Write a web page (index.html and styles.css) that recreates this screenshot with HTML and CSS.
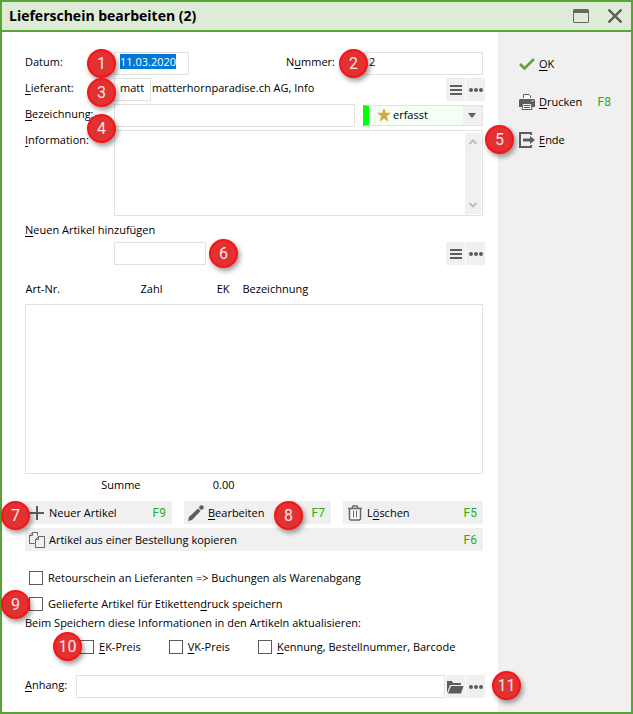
FILE: index.html
```html
<!DOCTYPE html>
<html lang="de">
<head>
    <meta charset="UTF-8">
    <meta name="viewport" content="width=device-width, initial-scale=1.0">
    <title>Lieferschein bearbeiten (2)</title>
    <link rel="stylesheet" href="styles.css">
</head>
<body>
    <div class="window">
        <header class="titlebar">
            <h1>Lieferschein bearbeiten (2)</h1>
            <button class="title-btn" aria-label="Maximieren">
                <svg width="16" height="14" viewBox="0 0 16 14"><path d="M1 0h14l1 1v12l-1 1H1l-1-1V1z" fill="#666"/><path d="M1 4h14v9H1z" fill="#deecd7"/></svg>
            </button>
            <button class="title-btn" aria-label="Schliessen">
                <svg width="14" height="14" viewBox="0 0 14 14"><path d="M0.500 0.500l13 13M13.500 0.500l-13 13" stroke="#5c5c5c" stroke-width="2.4"/></svg>
            </button>
        </header>

        <div class="content">
            <main class="form">
                <div class="row">
                    <label class="label raised" for="datum">Datum:</label>
                    <div class="field">
                        <input id="datum" class="input date" type="text" value="11.03.2020">
                        <span class="badge before">1</span>
                    </div>
                    <label class="label-number raised" for="nummer">N<u>u</u>mmer:</label>
                    <div class="field number">
                        <input id="nummer" class="input" type="text" value="2">
                        <span class="badge before-number">2</span>
                    </div>
                </div>
                <div class="row">
                    <label class="label raised" for="lieferant"><u>L</u>ieferant:</label>
                    <div class="field">
                        <input id="lieferant" class="input short" type="text" value="matt">
                        <span class="badge before lower">3</span>
                    </div>
                    <span class="supplier raised">matterhornparadise.ch AG, Info</span>
                    <div class="tools">
                        <button class="tool" aria-label="Liste"><svg width="12" height="10" viewBox="0 0 12 10"><path d="M0 1h12M0 5h12M0 9h12" stroke="#5c5c5c" stroke-width="2"/></svg></button>
                        <button class="tool" aria-label="Mehr"><svg width="14" height="4" viewBox="0 0 14 4"><g fill="#5c5c5c"><circle cx="2" cy="2" r="2"/><circle cx="7" cy="2" r="2"/><circle cx="12" cy="2" r="2"/></g></svg></button>
                    </div>
                </div>
                <div class="row">
                    <label class="label raised" for="bezeichnung"><u>B</u>ezeichnung:</label>
                    <div class="field grow">
                        <input id="bezeichnung" class="input" type="text">
                        <span class="badge before lowest">4</span>
                    </div>
                    <div class="status">
                        <select class="status-select" aria-label="Status">
                            <option>erfasst</option>
                        </select>
                        <svg class="star" width="14" height="14" viewBox="0 0 14 14"><path d="M7 0l1.800 4.800H14L9.900 8.200l1.500 5.500L7 10.500l-4.400 3.200 1.500-5.500L0 4.800h5.200z" fill="#d4a941"/></svg>
                        <svg class="arrow" width="8" height="5" viewBox="0 0 8 5"><path d="M0 0h8L4 5z" fill="#5c5c5c"/></svg>
                    </div>
                </div>
                <div class="row row-info">
                    <label class="label" for="information"><u>I</u>nformation:</label>
                    <div class="field grow">
                        <textarea id="information" class="textarea"></textarea>
                        <div class="scroll">
                            <svg width="8" height="6" viewBox="0 0 8 6"><path d="M0.500 5L4 1.500 7.500 5" fill="none" stroke="#bdbdbd" stroke-width="2"/></svg>
                            <svg width="8" height="6" viewBox="0 0 8 6"><path d="M0.500 1L4 4.500 7.500 1" fill="none" stroke="#bdbdbd" stroke-width="2"/></svg>
                        </div>
                    </div>
                </div>

                <label class="add-label" for="artikel"><u>N</u>euen Artikel hinzufügen</label>
                <div class="row">
                    <div class="field add-field">
                        <input id="artikel" class="input article" type="text">
                        <span class="badge after">6</span>
                    </div>
                    <div class="tools">
                        <button class="tool" aria-label="Liste"><svg width="12" height="10" viewBox="0 0 12 10"><path d="M0 1h12M0 5h12M0 9h12" stroke="#5c5c5c" stroke-width="2"/></svg></button>
                        <button class="tool" aria-label="Mehr"><svg width="14" height="4" viewBox="0 0 14 4"><g fill="#5c5c5c"><circle cx="2" cy="2" r="2"/><circle cx="7" cy="2" r="2"/><circle cx="12" cy="2" r="2"/></g></svg></button>
                    </div>
                </div>

                <table class="articles">
                    <colgroup><col class="col-nr"><col class="col-count"><col class="col-price"><col></colgroup>
                    <thead>
                        <tr><th>Art-Nr.</th><th>Zahl</th><th class="price">EK</th><th>Bezeichnung</th></tr>
                    </thead>
                    <tbody>
                        <tr><td class="list" colspan="4"></td></tr>
                    </tbody>
                    <tfoot>
                        <tr><td class="right">Summe</td><td></td><td class="right total">0.00</td><td></td></tr>
                    </tfoot>
                </table>

                <div class="actions">
                    <button class="action">
                        <svg width="16" height="16" viewBox="0 0 16 16"><path d="M8 1v14M1 8h14" stroke="#5c5c5c" stroke-width="2"/></svg>
                        Neuer Artikel <kbd>F9</kbd>
                        <span class="badge on-new">7</span>
                    </button>
                    <button class="action">
                        <svg width="16" height="16" viewBox="0 0 16 16"><path d="M0 16l1-4L10 3.500l2.500 2.500L4 15z" fill="#5c5c5c"/><circle cx="13.500" cy="2.500" r="2.300" fill="#5c5c5c"/></svg>
                        <span><u>B</u>earbeiten</span> <kbd>F7</kbd>
                        <span class="badge on-edit">8</span>
                    </button>
                    <button class="action">
                        <svg width="16" height="16" viewBox="0 0 16 16"><path d="M3 4h10v10l-1 1H4l-1-1z" fill="#fafafa"/><path d="M2.500 4v10l1 1h9l1-1V4M1 3.500h14M5 3l1-2h4l1 2" fill="none" stroke="#666" stroke-width="1.500"/><path d="M6.500 5.500v7M9.500 5.500v7" stroke="#666"/></svg>
                        <span>L<u>ö</u>schen</span> <kbd>F5</kbd>
                    </button>
                    <button class="action wide">
                        <svg width="16" height="16" viewBox="0 0 16 16"><path d="M5.500 11.500h-5v-8l3-3h5v3M3.500 0.500v3h-3M6.500 7.500l3-3h6v11h-9zM9.500 4.500v3h-3" fill="none" stroke="#666"/></svg>
                        Artikel aus einer Bestellung kopieren <kbd>F6</kbd>
                    </button>
                </div>

                <div class="checks">
                    <label class="check"><input type="checkbox">Retourschein an Lieferanten =&gt; Buchungen als Warenabgang</label>
                    <label class="check"><input type="checkbox"><span>Gelieferte Artikel für Etiketten<u>d</u>ruck speichern</span><span class="badge on-check">9</span></label>
                </div>
                <p class="note">Beim Speichern diese Informationen in den Artikeln aktualisieren:</p>
                <div class="check-row">
                    <label class="check"><input type="checkbox"><span><u>E</u>K-Preis</span><span class="badge on-price">10</span></label>
                    <label class="check"><input type="checkbox"><span><u>V</u>K-Preis</span></label>
                    <label class="check"><input type="checkbox"><span><u>K</u>ennung, Bestellnummer, Barcode</span></label>
                </div>

                <div class="row row-file">
                    <label class="label-file raised" for="anhang"><u>A</u>nhang:</label>
                    <div class="field grow"><input id="anhang" class="input" type="text"></div>
                    <div class="tools">
                        <button class="tool" aria-label="Datei öffnen"><svg width="17" height="14" viewBox="0 0 17 14"><path d="M0 13V1h5l1 2h8v2H3z" fill="#5c5c5c"/><path d="M4 6h12.500L14 13.500H1z" fill="#5c5c5c"/></svg></button>
                        <button class="tool" aria-label="Mehr"><svg width="14" height="4" viewBox="0 0 14 4"><g fill="#5c5c5c"><circle cx="2" cy="2" r="2"/><circle cx="7" cy="2" r="2"/><circle cx="12" cy="2" r="2"/></g></svg></button>
                    </div>
                    <span class="badge on-file">11</span>
                </div>
            </main>

            <aside class="sidebar">
                <button class="side-btn">
                    <svg width="16" height="16" viewBox="0 0 16 16"><path d="M1 8l4.500 4.500L15 3" fill="none" stroke="#58a535" stroke-width="2.600"/></svg>
                    <span><u>O</u>K</span>
                </button>
                <button class="side-btn">
                    <svg width="16" height="16" viewBox="0 0 16 16"><path d="M0 6l1-1h14l1 1v7h-3v-3H3v3H0z" fill="#5c5c5c"/><path d="M4.500 4V0.500h5.500l1.500 1.500v2" fill="#fafafa" stroke="#5c5c5c"/><path d="M4 9.500h8l1 6H3z" fill="#fafafa" stroke="#5c5c5c"/><path d="M5 11.500h6M5 13.500h6" stroke="#5c5c5c"/><path d="M12.500 7h2" stroke="#fff"/></svg>
                    <span><u>D</u>rucken</span> <kbd>F8</kbd>
                </button>
                <button class="side-btn">
                    <svg width="16" height="16" viewBox="0 0 16 16"><path d="M12 3V1H1v14h11v-2" fill="none" stroke="#5c5c5c" stroke-width="2"/><path d="M4 6.500h7V4l5 4-5 4V9.500H4z" fill="#5c5c5c"/></svg>
                    <span><u>E</u>nde</span>
                    <span class="badge on-end">5</span>
                </button>
            </aside>
        </div>
    </div>

    <script>
        // Start with the date selected so it can be overwritten
        var datum = document.getElementById("datum");
        datum.focus();
        datum.select();
    </script>
</body>
</html>
```
FILE: styles.css
```css
* {
    box-sizing: border-box;
}
body {
    margin: 0;
    font: 11px/16px "Open Sans", "Noto Sans", sans-serif;
    color: #000;
}
button, input, textarea, select {
    font: inherit;
    color: inherit;
    border-radius: 0;
    outline: none;
}
button {
    border: 0;
    padding: 0;
    background: none;
}
svg {
    display: block;
    flex: none;
}
u {
    text-underline-offset: 2px;
}
kbd {
    font: 12px/16px Roboto, sans-serif;
    color: #1fae1f;
    margin-left: auto;
}
.window {
    display: flex;
    flex-direction: column;
    min-height: 100vh;
    border: 2px solid #58a535;
}
.titlebar {
    display: flex;
    align-items: center;
    height: 30px;
    padding: 0 9px 0 7px;
    gap: 19px;
    background: #deecd7;
    border-bottom: 2px solid #58a535;
}
.titlebar h1 {
    flex: 1;
    margin: 0;
    font-size: 14px;
    line-height: 20px;
    font-weight: 700;
}
.content {
    display: flex;
    flex: 1;
}
.form {
    flex: 1;
    padding: 20px 15px 14px 23px;
}
.sidebar {
    width: 133px;
    padding: 20px 20px 20px 21px;
    background: #f0f0f0;
}

/* Form rows */
.row {
    display: flex;
    align-items: center;
    position: relative;
    margin-bottom: 3px;
}
.field {
    position: relative;
}
.grow {
    flex: 1;
}
.label {
    width: 89px;
}
.label-number {
    margin-left: auto;
}
.raised {
    padding-bottom: 4px;
}
.input {
    display: block;
    width: 100%;
    height: 23px;
    padding: 0 5px 4px;
    border: 1px solid #e2e2e2;
    background: #fff;
}
.date {
    width: 75px;
}
.date::selection {
    background: #0078d7;
    color: #fff;
}
.short {
    width: 37px;
}
.number {
    width: 120px;
    margin-left: 28px;
}
.supplier {
    margin-left: 1px;
    font-weight: 500;
}
.tools {
    display: flex;
    gap: 1px;
    margin-left: auto;
    margin-right: -2px;
}
.tool {
    display: flex;
    align-items: center;
    justify-content: center;
    width: 19px;
    height: 23px;
    background: #f0f0f0;
}
.status {
    position: relative;
    width: 120px;
    margin-left: 8px;
}
.status-select {
    appearance: none;
    display: block;
    width: 100%;
    height: 21px;
    padding: 0 20px 2px 24px;
    border: 1px solid #e2e2e2;
    border-left: 6px solid #0f0;
    background: linear-gradient(to left, #f0f0f0 19px, #f5fff5 19px);
}
.star {
    position: absolute;
    left: 14px;
    top: 3px;
}
.arrow {
    position: absolute;
    right: 7px;
    top: 8px;
}
.row-info {
    align-items: flex-start;
    margin-bottom: 6px;
}
.row-info .label {
    padding-top: 2px;
}
.textarea {
    display: block;
    width: 100%;
    height: 86px;
    border: 1px solid #e2e2e2;
    resize: none;
}
.scroll {
    display: flex;
    flex-direction: column;
    align-items: center;
    justify-content: space-between;
    position: absolute;
    top: 3px;
    right: 2px;
    bottom: 2px;
    width: 16px;
    padding: 6px 0;
    background: #f0f0f0;
}
.add-label {
    display: block;
    margin-bottom: 4px;
}
.add-field {
    margin-left: 89px;
}
.article {
    width: 92px;
}

/* Article list */
.articles {
    width: 100%;
    margin-top: 16px;
    table-layout: fixed;
    border-collapse: collapse;
}
.articles th, .articles td {
    padding: 0;
    font-weight: normal;
    text-align: left;
}
.articles thead th {
    padding-bottom: 7px;
}
.articles tfoot td {
    padding-top: 3px;
}
.articles .col-nr {
    width: 115px;
}
.articles .col-count {
    width: 50px;
}
.articles .col-price {
    width: 52px;
}
.articles .price {
    text-align: right;
    padding-right: 13px;
}
.articles .right {
    text-align: right;
}
.articles .total {
    padding-right: 8px;
    font-weight: 500;
}
.articles .list {
    height: 169px;
    border: 1px solid #e2e2e2;
}

/* Buttons */
.actions {
    display: grid;
    grid-template-columns: 147fr 147fr 140fr;
    gap: 4px 12px;
    margin-top: 8px;
}
.action {
    display: flex;
    align-items: center;
    position: relative;
    gap: 4px;
    height: 23px;
    padding: 0 6px 0 4px;
    background: #f0f0f0;
}
.wide {
    grid-column: 1 / -1;
}
.side-btn {
    display: flex;
    align-items: center;
    position: relative;
    gap: 4px;
    width: 100%;
    height: 24px;
    margin-bottom: 14px;
}

/* Checkboxes */
.checks {
    display: grid;
    gap: 10px;
    margin: 19px 0 3px 4px;
}
.check {
    display: flex;
    align-items: center;
    position: relative;
    gap: 5px;
}
.check input {
    appearance: none;
    width: 14px;
    height: 14px;
    margin: 0;
    border: 1px solid #5c5c5c;
    background: #fff;
}
.check input:checked {
    background: #5c5c5c;
}
.note {
    margin: 0 0 8px;
}
.check-row {
    display: flex;
    gap: 28px;
    margin: 0 0 20px 55px;
}
.row-file {
    margin-bottom: 0;
}
.label-file {
    width: 51px;
}
.row-file .tools {
    margin-left: 1px;
}

/* Numbered markers */
.badge {
    position: absolute;
    z-index: 1;
    width: 29px;
    height: 29px;
    border: 2px solid #fb1212;
    border-radius: 50%;
    background: #e03232;
    box-shadow: 2px 3px 5px rgba(0, 0, 0, 0.4);
    color: #fbe3e3;
    font: 16px/25px Roboto, sans-serif;
    text-align: center;
}
.before {
    left: -27px;
    top: -3px;
}
.before-number {
    left: -24px;
    top: -3px;
}
.lower {
    top: 0;
}
.lowest {
    top: 10px;
}
.after {
    left: 95px;
    top: -3px;
}
.on-new {
    left: -24px;
    top: 0;
}
.on-edit {
    left: 90px;
    top: 0;
}
.on-check {
    left: -28px;
    top: -6px;
}
.on-price {
    left: -27px;
    top: -7px;
}
.on-end {
    left: -34px;
    top: -3px;
}
.on-file {
    right: -38px;
    top: -4px;
}
```
